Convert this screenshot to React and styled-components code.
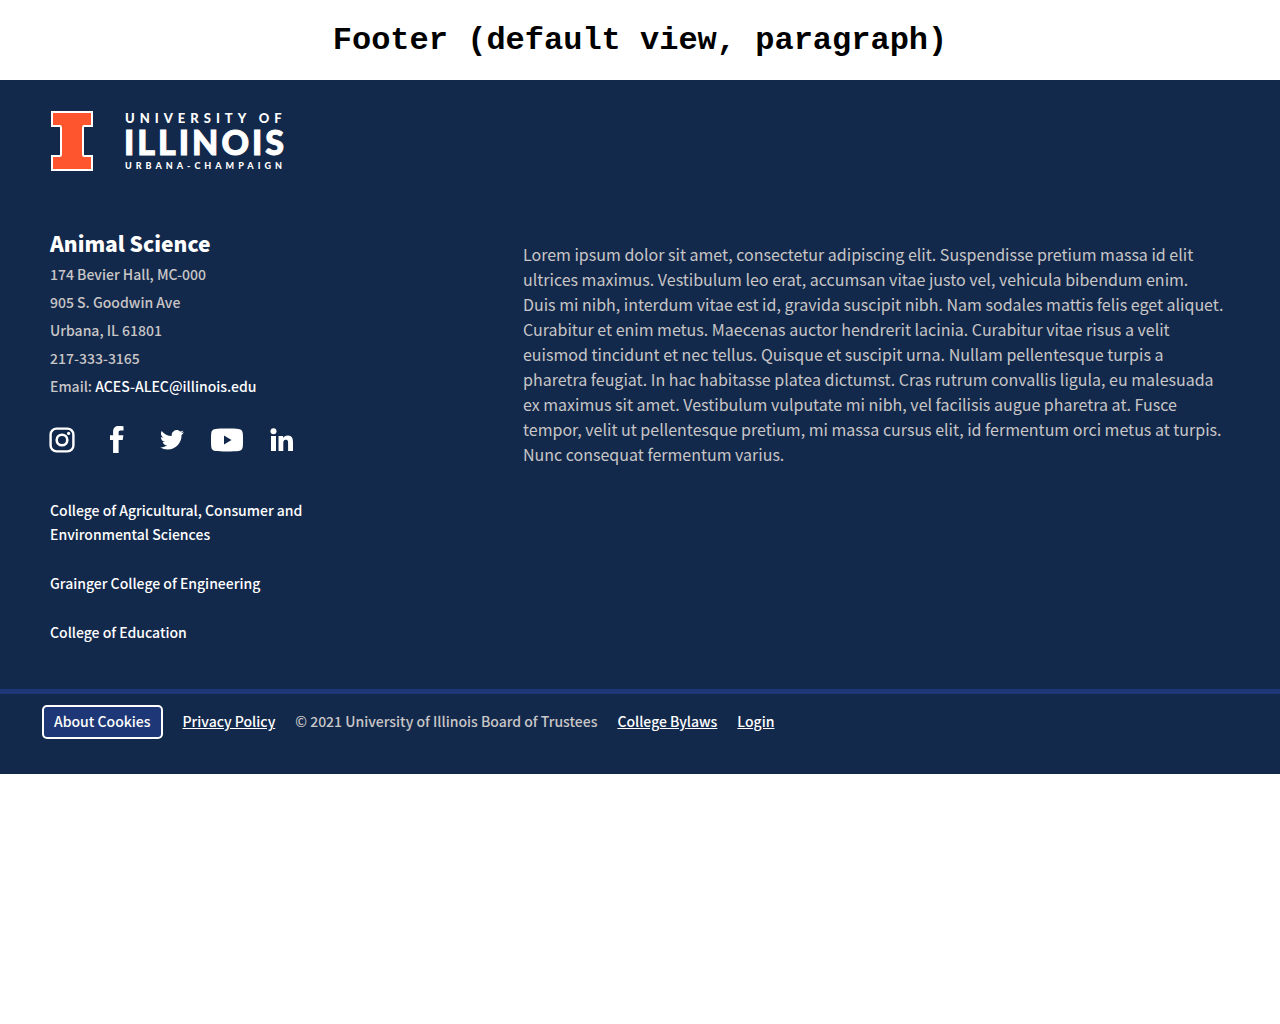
import React from "react";
import styled, { createGlobalStyle } from "styled-components";

const GlobalStyle = createGlobalStyle`
  *, *::before, *::after { box-sizing: border-box; }
  body {
    margin: 0;
    background: #fff;
    color: #000;
    font-family: "Source Sans Pro", "Noto Sans CJK SC", "Noto Sans", sans-serif;
    font-weight: 500;
  }
`;

const PageTitle = styled.h1`
  margin: 0;
  padding: 2px 16px 0;
  font: bold 32px/78px "Courier New", "Liberation Mono", monospace;
  text-align: center;
`;

const FooterRoot = styled.footer`
  background: #13294b;
  color: #c8c6c7;
`;

const BrandRow = styled.div`
  padding: 31px 50px 0;
`;

const BrandLink = styled.a`
  display: inline-flex;
  vertical-align: top;
  color: #fff;
`;

const Columns = styled.div`
  display: grid;
  grid-template-columns: 2fr 3fr;
  padding: 57px 50px 45px;
`;

const SiteName = styled.h2`
  margin: 0;
  padding-bottom: 2px;
  color: #fff;
  font-size: 21px;
  line-height: 30px;
  font-weight: 900;
`;

const Address = styled.address`
  font-style: normal;
  font-size: 14px;
  line-height: 28px;
`;

const MailLink = styled.a`
  color: #fff;
  text-decoration: none;
`;

const SocialList = styled.ul`
  display: flex;
  gap: 23px;
  margin: 24px 0 0 -4px;
  padding: 0;
  list-style: none;
`;

const SocialLink = styled.a`
  display: flex;
  align-items: center;
  justify-content: center;
  width: 32px;
  height: 32px;
  color: #fff;
`;

const UnitList = styled.ul`
  display: flex;
  flex-direction: column;
  gap: 25px;
  max-width: 60%;
  margin: 42px 0 0;
  padding: 0;
  list-style: none;
  font-size: 14px;
  line-height: 24px;
`;

const UnitLink = styled.a`
  color: #fff;
  text-decoration: none;
`;

const Blurb = styled.p`
  margin: 14px 0 0;
  padding-left: 1px;
  font-size: 16px;
  font-weight: 400;
  line-height: 25px;
`;

const LegalBar = styled.div`
  display: flex;
  flex-wrap: wrap;
  align-items: center;
  gap: 20px;
  padding: 11px 42px 35px;
  border-top: 5px solid #1e3877;
  font-size: 14px;
  line-height: 24px;
`;

const CookieButton = styled.button`
  padding: 2px 10px 4px;
  border: 2px solid #fff;
  border-radius: 5px;
  background: #1e3877;
  color: #fff;
  font: inherit;
  cursor: pointer;
`;

const LegalText = styled.span`
  padding-bottom: 2px;
`;

const LegalLink = styled.a`
  padding-bottom: 2px;
  color: #fff;
  text-decoration: underline;
  text-underline-offset: 1px;
`;

function Wordmark() {
  return (
    <svg width="240" height="60" viewBox="0 0 240 60" overflow="visible" role="img" aria-label="University of Illinois Urbana-Champaign">
      <path
        d="M2 1H42V15H34Q33 15 33 17V43Q33 45 34 45H42V59H2V45H10Q11 45 11 43V17Q11 15 10 15H2Z"
        fill="#ff552e"
        stroke="#fff"
        strokeWidth="2"
      />
      <g fill="#fff" fontFamily="Lato, sans-serif" fontWeight="900">
        <text x="75" y="12" fontSize="13" letterSpacing="5">UNIVERSITY OF</text>
        <text x="74" y="44" fontSize="34" letterSpacing="3" stroke="#fff" strokeWidth="1">ILLINOIS</text>
        <text x="75" y="58" fontSize="9" letterSpacing="4">URBANA-CHAMPAIGN</text>
      </g>
    </svg>
  );
}

const InstagramIcon = () => (
  <svg width="26" height="26" viewBox="0 0 26 26" fill="none" stroke="currentColor" aria-hidden="true">
    <rect x="1.6" y="1.6" width="22.8" height="22.8" rx="6" strokeWidth="2.4" />
    <circle cx="13" cy="13" r="5.3" strokeWidth="2.6" />
    <circle cx="19.6" cy="6.4" r="1.6" fill="currentColor" stroke="none" />
  </svg>
);

const FacebookIcon = () => (
  <svg width="14" height="28" viewBox="0 0 14 28" fill="currentColor" aria-hidden="true">
    <path d="M3.1 27V14H0V9.3h3.1V5.6C3.1 2 5.2 0 8.7 0c2 0 3.8.2 4.8.3v4.1h-2.8c-1.7 0-2.1.9-2.1 2.1v2.8h4.8L12.7 14H8.6v13z" />
  </svg>
);

const TwitterIcon = () => (
  <svg width="24" height="20" viewBox="0 0 24 20" fill="currentColor" aria-hidden="true">
    <path d="M23.95 2.37a10 10 0 0 1-2.82.77 4.96 4.96 0 0 0 2.16-2.72 10 10 0 0 1-3.13 1.2A4.92 4.92 0 0 0 11.78 6.1 13.98 13.98 0 0 1 1.64.96a4.9 4.9 0 0 0 1.52 6.57 4.9 4.9 0 0 1-2.23-.62v.06a4.93 4.93 0 0 0 3.95 4.83 5 5 0 0 1-2.21.08 4.94 4.94 0 0 0 4.6 3.42A9.87 9.87 0 0 1 0 17.34a14 14 0 0 0 7.55 2.21c9.05 0 14-7.5 14-13.98 0-.21-.01-.42-.02-.63a9.9 9.9 0 0 0 2.42-2.57z" />
  </svg>
);

const YoutubeIcon = () => (
  <svg width="32" height="24" viewBox="0 0 32 24" fill="currentColor" aria-hidden="true">
    <path
      fillRule="evenodd"
      d="M16 .5c5 0 9 .1 11.6.5 3 .3 4 2.1 4.2 4.5.3 4 .3 9 0 13-.2 2.4-1.2 4.2-4.2 4.6-2.6.3-6.6.4-11.6.4s-9-.1-11.6-.4C1.4 22.7.4 20.9.2 18.5c-.3-4-.3-9 0-13C.4 3.1 1.4 1.3 4.4 1 7 .6 11 .5 16 .5zM13 7.500v9l7.500-4.500z"
    />
  </svg>
);

const LinkedinIcon = () => (
  <svg width="24" height="24" viewBox="0 0 24 24" fill="currentColor" aria-hidden="true">
    <circle cx="3.5" cy="3.2" r="3" />
    <path d="M1 8h5v15H1zM8.500 8h4.600v2.100c.8-1.500 2.500-2.500 4.700-2.500 4.300 0 5.200 3 5.200 7V23h-4.900v-7.500c0-1.800 0-3.700-2.300-3.700s-2.500 1.800-2.500 3.600V23H8.500z" />
  </svg>
);

const addressLines = ["174 Bevier Hall, MC-000", "905 S. Goodwin Ave", "Urbana, IL 61801", "217-333-3165"];

const socials = [
  ["Instagram", InstagramIcon],
  ["Facebook", FacebookIcon],
  ["Twitter", TwitterIcon],
  ["YouTube", YoutubeIcon],
  ["LinkedIn", LinkedinIcon],
];

const units = [
  "College of Agricultural, Consumer and Environmental Sciences",
  "Grainger College of Engineering",
  "College of Education",
];

export default function App() {
  return (
    <>
      <GlobalStyle />
      <PageTitle>Footer (default view, paragraph)</PageTitle>
      <FooterRoot>
        <BrandRow>
          <BrandLink href="#home">
            <Wordmark />
          </BrandLink>
        </BrandRow>
        <Columns>
          <div>
            <SiteName>Animal Science</SiteName>
            <Address>
              {addressLines.map((line) => (
                <div key={line}>{line}</div>
              ))}
              <div>
                Email: <MailLink href="mailto:ACES-ALEC@illinois.edu">ACES-ALEC@illinois.edu</MailLink>
              </div>
            </Address>
            <SocialList>
              {socials.map(([name, Icon]) => (
                <li key={name}>
                  <SocialLink href={"#" + name.toLowerCase()} aria-label={name}>
                    <Icon />
                  </SocialLink>
                </li>
              ))}
            </SocialList>
            <UnitList>
              {units.map((unit) => (
                <li key={unit}>
                  <UnitLink href="#unit">{unit}</UnitLink>
                </li>
              ))}
            </UnitList>
          </div>
          <Blurb>
            Lorem ipsum dolor sit amet, consectetur adipiscing elit. Suspendisse pretium massa id elit ultrices
            maximus. Vestibulum leo erat, accumsan vitae justo vel, vehicula bibendum enim.
            <br />
            Duis mi nibh, interdum vitae est id, gravida suscipit nibh. Nam sodales mattis felis eget aliquet.
            Curabitur et enim metus. Maecenas auctor hendrerit lacinia. Curabitur vitae risus a velit euismod
            tincidunt et nec tellus. Quisque et suscipit urna. Nullam pellentesque turpis a pharetra feugiat. In hac
            habitasse platea dictumst. Cras rutrum convallis ligula, eu malesuada ex maximus sit amet. Vestibulum
            vulputate mi nibh, vel facilisis augue pharetra at. Fusce tempor, velit ut pellentesque pretium, mi massa
            cursus elit, id fermentum orci metus at turpis. Nunc consequat fermentum varius.
          </Blurb>
        </Columns>
        <LegalBar>
          <CookieButton type="button">About Cookies</CookieButton>
          <LegalLink href="#privacy">Privacy Policy</LegalLink>
          <LegalText>© 2021 University of Illinois Board of Trustees</LegalText>
          <LegalLink href="#bylaws">College Bylaws</LegalLink>
          <LegalLink href="#login">Login</LegalLink>
        </LegalBar>
      </FooterRoot>
    </>
  );
}
